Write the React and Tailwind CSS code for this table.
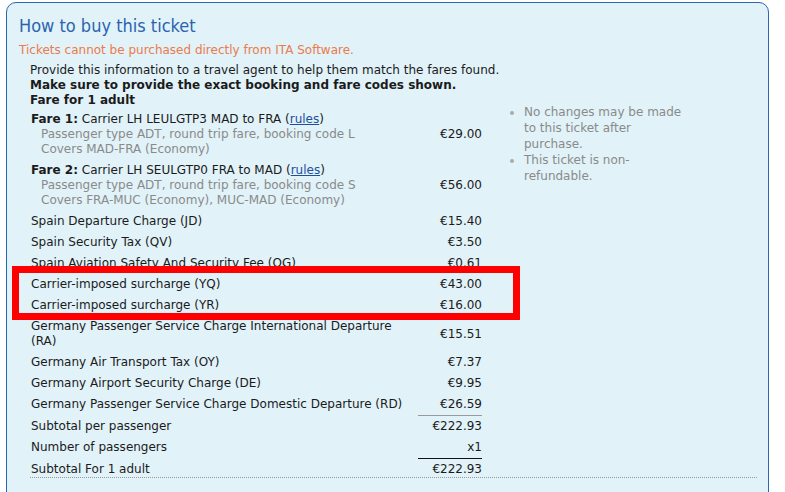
export default function App() {
  const rows = [
    ["Spain Departure Charge (JD)", "€15.40"],
    ["Spain Security Tax (QV)", "€3.50"],
    ["Spain Aviation Safety And Security Fee (OG)", "€0.61"],
    ["Carrier-imposed surcharge (YQ)", "€43.00"],
    ["Carrier-imposed surcharge (YR)", "€16.00"],
    ["Germany Passenger Service Charge International Departure (RA)", "€15.51"],
    ["Germany Air Transport Tax (OY)", "€7.37"],
    ["Germany Airport Security Charge (DE)", "€9.95"],
    ["Germany Passenger Service Charge Domestic Departure (RD)", "€26.59"],
  ];
  return (
    <div
      className="relative h-[492px] overflow-hidden bg-white pl-[6px] pr-[16px] pt-[2px] text-[12px] leading-[15px] text-[#1b1b1b]"
      style={{ fontFamily: '"DejaVu Sans", Tahoma, sans-serif' }}
    >
      <div className="h-[520px] rounded-t-[10px] border border-[#2a67b1] bg-[#e1f2f9] pl-[12px] pr-[11px] pt-[12px]">
        <h1
          className="text-[18px] leading-[22px] text-[#2b64ae]"
          style={{ fontFamily: '"DejaVu Sans Condensed", "DejaVu Sans", sans-serif' }}
        >
          How to buy this ticket
        </h1>
        <div className="mt-[6px] text-[#ec7a4b]">Tickets cannot be purchased directly from ITA Software.</div>
        <div className="ml-[11px] mt-[5px] border-b border-dotted border-[#999] pb-0">
          <div>Provide this information to a travel agent to help them match the fares found.</div>
          <div className="font-bold">Make sure to provide the exact booking and fare codes shown.</div>
          <div className="font-bold">Fare for 1 adult</div>
          <div className="flex">
            <table className="mt-[1px] border-collapse">
              <tbody>
                <tr>
                  <td className="w-[388px] py-[3px] pl-[1px] pr-[6px] align-top">
                    <div>
                      <span className="font-bold">Fare 1:</span> Carrier LH LEULGTP3 MAD to FRA (
                      <span className="text-[#1f4e9c] underline">rules</span>)
                    </div>
                    <div className="pl-[10px] text-[#8a8a8a]">
                      Passenger type ADT, round trip fare, booking code L
                    </div>
                    <div className="pl-[10px] text-[#8a8a8a]">Covers MAD-FRA (Economy)</div>
                  </td>
                  <td className="w-[64px] py-[3px] text-right align-middle">€29.00</td>
                </tr>
                <tr>
                  <td className="py-[3px] pl-[1px] pr-[6px] align-top">
                    <div>
                      <span className="font-bold">Fare 2:</span> Carrier LH SEULGTP0 FRA to MAD (
                      <span className="text-[#1f4e9c] underline">rules</span>)
                    </div>
                    <div className="pl-[10px] text-[#8a8a8a]">
                      Passenger type ADT, round trip fare, booking code S
                    </div>
                    <div className="pl-[10px] text-[#8a8a8a]">Covers FRA-MUC (Economy), MUC-MAD (Economy)</div>
                  </td>
                  <td className="py-[3px] text-right align-middle">€56.00</td>
                </tr>
                {rows.map(([l, v]) => (
                  <tr key={l}>
                    <td className="py-[3px] pl-[1px] pr-[6px]">{l}</td>
                    <td className="py-[3px] text-right">{v}</td>
                  </tr>
                ))}
                <tr>
                  <td className="py-[3px] pl-[1px] pr-[6px]">Subtotal per passenger</td>
                  <td className="border-t border-[#999] py-[3px] text-right">€222.93</td>
                </tr>
                <tr>
                  <td className="py-[3px] pl-[1px] pr-[6px]">Number of passengers</td>
                  <td className="py-[3px] text-right">x1</td>
                </tr>
                <tr>
                  <td className="pb-0 pt-[3px] pl-[1px] pr-[6px]">Subtotal For 1 adult</td>
                  <td className="border-t border-[#111] pb-0 pt-[3px] text-right">€222.93</td>
                </tr>
              </tbody>
            </table>
            <ul className="ml-[30px] mt-[-4px] w-[178px] list-disc pl-[12px] leading-[16px] text-[#8a8a8a] marker:text-[#aaa]">
              <li>No changes may be made to this ticket after purchase.</li>
              <li>This ticket is non-refundable.</li>
            </ul>
          </div>
        </div>
      </div>
      <div className="absolute left-[12px] top-[266px] h-[54px] w-[508px] border-[7px] border-[#ff0000]" />
    </div>
  );
}
